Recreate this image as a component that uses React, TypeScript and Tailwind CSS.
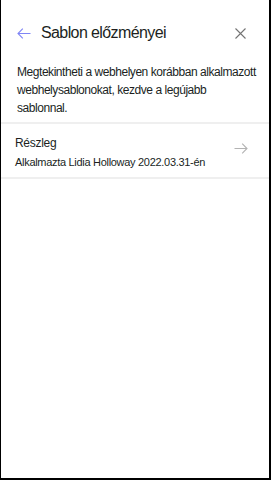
import React from "react";

export default function App() {
  return (
    <div className="w-[271px] h-[480px] bg-white border-l border-r-2 border-b-2 border-black flex flex-col" style={{ fontFamily: '"Liberation Sans", Arial, sans-serif' }}>
      <div className="flex items-center h-[44px] mt-[11px] pl-[16px] pr-[23px]">
        <svg width="14" height="11" viewBox="0 0 14 11" className="shrink-0">
          <path d="M13.5 5.5H1M5.8 0.6L1 5.5L5.8 10.4" fill="none" stroke="#7f85f5" strokeWidth="1.1" />
        </svg>
        <div className="ml-[10px] text-[16px] tracking-[-0.6px] text-[#201f1e] leading-none flex-1">Sablon előzményei</div>
        <svg width="11" height="11" viewBox="0 0 11 11" className="shrink-0">
          <path d="M0.5 0.5L10.5 10.5M10.5 0.5L0.5 10.5" fill="none" stroke="#737373" strokeWidth="1.1" />
        </svg>
      </div>
      <div className="px-[16px] pt-[8px] pb-[5px] text-[12px] leading-[18px] tracking-[-0.45px] text-[#201f1e]">
        <div className="whitespace-nowrap">Megtekintheti a webhelyen korábban alkalmazott</div>
        <div className="whitespace-nowrap">webhelysablonokat, kezdve a legújabb</div>
        <div className="whitespace-nowrap">sablonnal.</div>
      </div>
      <div className="border-t-2 border-b-2 border-[#efefef] flex items-center pl-[14px] pr-[21px] h-[57px]">
        <div className="flex-1 pt-[3px]">
          <div className="text-[12px] leading-[16px] tracking-[-0.3px] text-[#201f1e]">Részleg</div>
          <div className="text-[11px] leading-[14px] tracking-[-0.3px] text-[#201f1e] mt-[4px]">Alkalmazta Lidia Holloway 2022.03.31-én</div>
        </div>
        <svg width="14" height="11" viewBox="0 0 14 11" className="shrink-0 -mt-[4px]">
          <path d="M0.5 5.5H13M8.2 0.6L13 5.5L8.2 10.4" fill="none" stroke="#b3b3b3" strokeWidth="1.1" />
        </svg>
      </div>
    </div>
  );
}
